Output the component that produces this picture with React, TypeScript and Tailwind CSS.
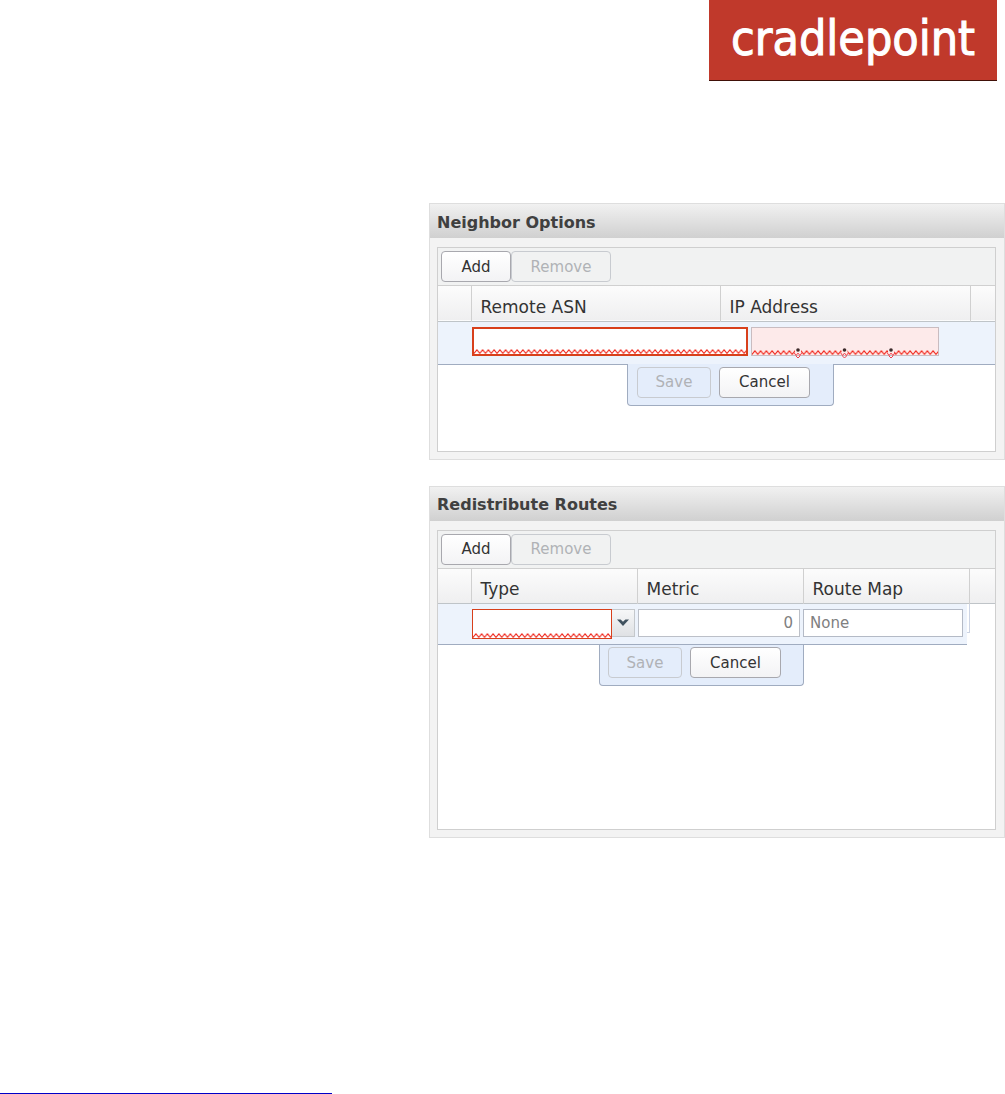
import { useId, type ReactNode } from 'react'
import clsx from 'clsx'

function Squiggle() {
  const id = useId()
  return (
    <svg className="pointer-events-none absolute bottom-0 left-0 h-[5px] w-full" aria-hidden="true">
      <defs>
        <pattern id={id} width="5.75" height="5" patternUnits="userSpaceOnUse">
          <path d="M-1 5.5 L2.87 0.8 L6.75 5.5" fill="none" stroke="#f0281e" strokeWidth="1.1" />
        </pattern>
      </defs>
      <rect width="100%" height="5" fill={`url(#${id})`} />
    </svg>
  )
}

function GridButton({
  children,
  disabled,
  className,
}: {
  children: ReactNode
  disabled?: boolean
  className?: string
}) {
  return (
    <button
      type="button"
      disabled={disabled}
      className={clsx(
        'h-[31px] rounded-[4px] border text-[15px] leading-5',
        disabled
          ? 'border-[#c8cbd0] text-[#b0b2b6]'
          : 'border-[#a8a8ae] bg-linear-to-b from-white to-[#f3f3f5] text-[#333]',
        className,
      )}
    >
      {children}
    </button>
  )
}

function Panel({
  title,
  columns,
  editor,
  actions,
  bodyClassName,
}: {
  title: string
  columns: { label: string; className: string }[]
  editor: ReactNode
  actions: ReactNode
  bodyClassName: string
}) {
  return (
    <section className="border border-[#dedede] bg-[#f3f3f3]">
      <h2 className="flex h-[34px] items-center bg-linear-to-b from-[#f1f1f1] to-[#d0d0d0] px-[7px] pt-[3px] text-[16px] leading-5 font-bold text-[#404040]">
        {title}
      </h2>
      <div className="pt-[9px] pr-2 pb-[7px] pl-[7px]">
        <div className="border border-[#cfcfcf] bg-white">
          <div className="flex h-[38px] items-center border-b border-[#d0d0d0] bg-[#f1f2f2] px-[3px]">
            <GridButton className="w-[70px]">Add</GridButton>
            <GridButton className="w-[100px]" disabled>
              Remove
            </GridButton>
          </div>
          <table className="w-full table-fixed border-collapse">
            <thead>
              <tr className="h-[35px] border-b border-[#bfc4c8] bg-linear-to-b from-[#fcfcfc] to-[#efeff0]">
                <td className="w-[33px]" />
                {columns.map((column) => (
                  <th
                    key={column.label}
                    scope="col"
                    className={clsx(
                      'border-l border-[#d0d0d0] p-0 pt-[7px] pl-[9px] text-left text-[17px] leading-5 font-normal text-[#333]',
                      column.className,
                    )}
                  >
                    {column.label}
                  </th>
                ))}
                <td className="border-l border-[#d0d0d0]" />
              </tr>
            </thead>
            <tbody>
              <tr>
                <td colSpan={columns.length + 2} className="p-0">
                  {editor}
                </td>
              </tr>
            </tbody>
          </table>
          <div className={bodyClassName}>{actions}</div>
        </div>
      </div>
    </section>
  )
}

function RowActions({ className }: { className: string }) {
  return (
    <div
      className={clsx(
        '-mt-px flex h-[42px] gap-2 rounded-b-[4px] border border-t-0 border-[#a0acc0] bg-[#e4edfb] pt-[3px]',
        className,
      )}
    >
      <GridButton className="w-[74px]" disabled>
        Save
      </GridButton>
      <GridButton className="w-[91px]">Cancel</GridButton>
    </div>
  )
}

function IpAddressField() {
  return (
    <div
      role="group"
      aria-label="IP Address"
      className="relative flex h-[29px] w-[188px] border border-[#c9bcc0] bg-[#fdeaea]"
    >
      {[1, 2, 3, 4].map((octet) => (
        <input
          key={octet}
          type="text"
          aria-label={`Octet ${octet}`}
          className="w-0 flex-1 bg-transparent px-1 text-[15px] outline-none"
        />
      ))}
      <Squiggle />
      <svg
        viewBox="0 0 186 11"
        className="pointer-events-none absolute -bottom-1 left-0 h-[11px] w-[186px]"
        aria-hidden="true"
      >
        {[46, 92.5, 139].map((x) => (
          <g key={x}>
            <rect x={x - 3} y="2" width="6" height="5" fill="#fdeaea" />
            <circle cx={x} cy="2" r="1.8" fill="#3c2a2a" />
            <path
              d={`M${x - 4} 4.5 l2 3 l2 -2.4 l2 2.4 l2 -3 M${x - 2} 8 l2 2 l2 -2`}
              fill="none"
              stroke="#f0404a"
            />
          </g>
        ))}
      </svg>
    </div>
  )
}

function NeighborOptions() {
  return (
    <Panel
      title="Neighbor Options"
      columns={[
        { label: 'Remote ASN', className: 'w-[249px]' },
        { label: 'IP Address', className: 'w-[250px]' },
      ]}
      editor={
        <div className="flex h-[43px] gap-[3px] border-b border-[#a0acc0] bg-[#edf3fc] pt-[5px] pl-[34px]">
          <div className="relative h-[29px] w-[276px] border-2 border-[#d8401c] bg-white">
            <input
              type="text"
              aria-label="Remote ASN"
              aria-invalid="true"
              className="block h-full w-full px-1 text-[15px] outline-none"
            />
            <Squiggle />
          </div>
          <IpAddressField />
        </div>
      }
      actions={<RowActions className="ml-[189px] w-[207px] pl-[9px]" />}
      bodyClassName="min-h-[87px]"
    />
  )
}

function RedistributeRoutes() {
  return (
    <Panel
      title="Redistribute Routes"
      columns={[
        { label: 'Type', className: 'w-[166px]' },
        { label: 'Metric', className: 'w-[166px]' },
        { label: 'Route Map', className: 'w-[166px]' },
      ]}
      editor={
        <div className="flex">
          <div className="flex h-[41px] w-[529px] gap-[3px] border-b border-[#a0acc0] bg-[#edf3fc] pt-[5px] pl-[34px]">
            <div className="flex">
              <div className="relative h-[30px] w-[140px] border border-[#d8401c] bg-white">
                <select
                  aria-label="Type"
                  aria-invalid="true"
                  className="block h-full w-full appearance-none px-1 text-[15px] outline-none"
                />
                <Squiggle />
              </div>
              <span className="flex h-[28px] w-[23px] items-center justify-center border border-l-0 border-[#c4c8cc] bg-linear-to-b from-[#f6f7f8] to-[#dfe1e4]">
                <svg viewBox="0 0 14 8" className="h-2 w-[14px]" aria-hidden="true">
                  <path d="M1 0.5 L4.6 0.5 L7 2.8 L9.4 0.5 L13 0.5 L7 7 Z" fill="#40525f" />
                </svg>
              </span>
            </div>
            <input
              type="text"
              aria-label="Metric"
              defaultValue="0"
              className="h-[28px] w-[162px] border border-[#bcc0c8] bg-white px-[6px] text-right text-[15px] text-[#808080] outline-none"
            />
            <input
              type="text"
              aria-label="Route Map"
              defaultValue="None"
              className="h-[28px] w-[160px] border border-[#b4bac6] bg-white px-[6px] text-[15px] text-[#808080] outline-none"
            />
          </div>
          <div className="h-[29px] w-[3px] border-r border-b border-[#ccd4e4]" />
        </div>
      }
      actions={<RowActions className="ml-[161px] w-[205px] pl-[8px]" />}
      bodyClassName="min-h-[185px]"
    />
  )
}

export default function App() {
  return (
    <div className="flex min-h-screen flex-col bg-white font-['DejaVu_Sans',Verdana,sans-serif]">
      <header className="flex justify-end pr-2">
        <div className="flex h-[81px] w-[288px] items-center justify-center border-b border-[#401008] bg-[#c0392b] pb-1 font-['DejaVu_Sans_Condensed','DejaVu_Sans',sans-serif] text-[48px] leading-none text-white [-webkit-text-stroke:1px_white]">
          cradlepoint
        </div>
      </header>
      <main className="flex flex-col gap-[26px] pt-[122px] pl-[429px]">
        <NeighborOptions />
        <RedistributeRoutes />
      </main>
      <hr className="mt-auto w-[33%] border-t border-[#0000c8]" />
    </div>
  )
}
